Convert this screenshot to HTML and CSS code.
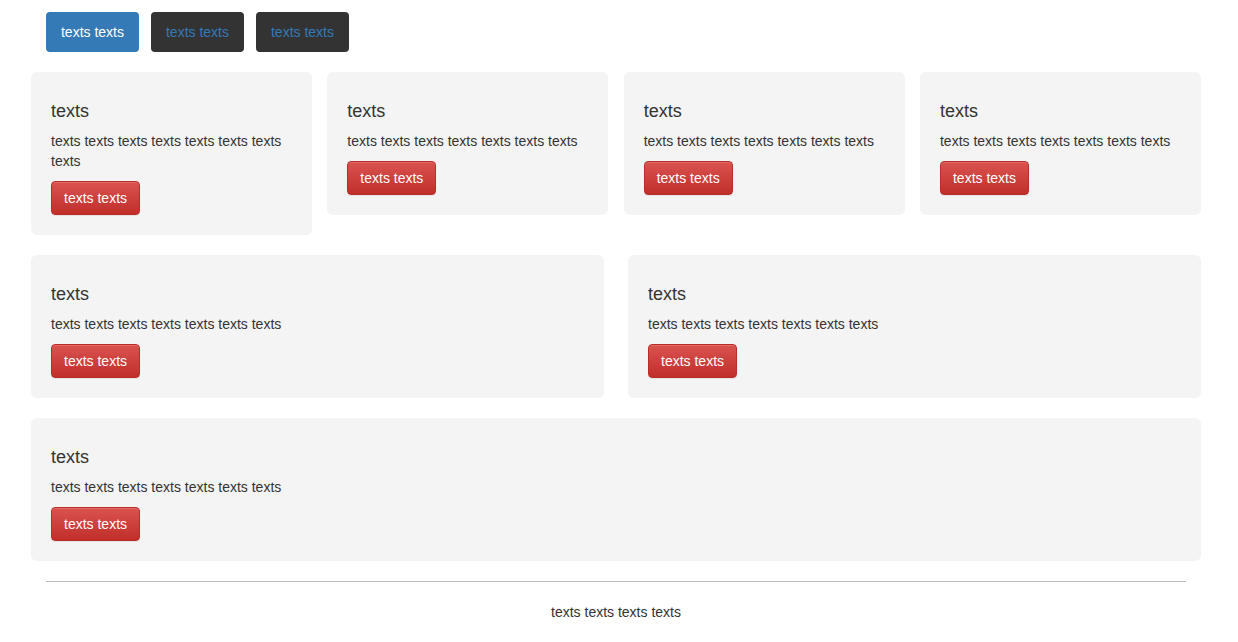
FILE: index.html
```html
<!DOCTYPE html>
<html>
<head>
<meta charset="utf-8">
<link rel="stylesheet" href="styles.css">
</head>
<body>
<div class="container">
  <nav class="nav">
    <a class="nav-btn active">texts texts</a>
    <a class="nav-btn">texts texts</a>
    <a class="nav-btn">texts texts</a>
  </nav>
  <div class="row row-4">
    <div class="card"><h3>texts</h3><p>texts texts texts texts texts texts texts texts</p><a class="btn">texts texts</a></div>
    <div class="card"><h3>texts</h3><p>texts texts texts texts texts texts texts</p><a class="btn">texts texts</a></div>
    <div class="card"><h3>texts</h3><p>texts texts texts texts texts texts texts</p><a class="btn">texts texts</a></div>
    <div class="card"><h3>texts</h3><p>texts texts texts texts texts texts texts</p><a class="btn">texts texts</a></div>
  </div>
  <div class="row row-2">
    <div class="card"><h3>texts</h3><p>texts texts texts texts texts texts texts</p><a class="btn">texts texts</a></div>
    <div class="card"><h3>texts</h3><p>texts texts texts texts texts texts texts</p><a class="btn">texts texts</a></div>
  </div>
  <div class="row row-1">
    <div class="card"><h3>texts</h3><p>texts texts texts texts texts texts texts</p><a class="btn">texts texts</a></div>
  </div>
  <hr class="divider">
  <footer class="footer">texts texts texts texts</footer>
</div>
</body>
</html>
```
FILE: styles.css
```css
html, body {
  margin: 0;
  padding: 0;
  background: #fff;
}
body {
  font-family: "Liberation Sans", Arial, sans-serif;
  font-size: 14px;
  line-height: 20px;
  color: #333;
}
.container {
  width: 1170px;
  margin-left: 31px;
  padding-top: 12px;
}
.nav {
  display: flex;
  gap: 12px;
  padding: 0 15px;
  margin-bottom: 20px;
}
.nav-btn {
  display: block;
  width: 93px;
  box-sizing: border-box;
  text-align: center;
  padding: 10px 0;
  background: #333;
  color: #337ab7;
  border-radius: 4px;
}
.nav-btn.active {
  background: #337ab7;
  color: #fff;
}
.row {
  display: grid;
  margin-bottom: 20px;
  align-items: start;
}
.row-4 {
  grid-template-columns: repeat(4, 1fr);
  gap: 15.33px;
}
.row-2 {
  grid-template-columns: 1fr 1fr;
  gap: 24px;
}
.row-1 {
  grid-template-columns: 1fr;
}
.card {
  background: #f4f4f4;
  border-radius: 6px;
  padding: 20px 20px 20px;
}
.card h3 {
  font-size: 18px;
  font-weight: normal;
  line-height: 20px;
  margin: 9px 0 10px;
}
.card p {
  margin: 0 0 10px;
}
.btn {
  display: inline-block;
  box-sizing: border-box;
  height: 34px;
  padding: 6px 12px;
  color: #fff;
  border: 1px solid #b92c28;
  border-radius: 4px;
  background: linear-gradient(to bottom, #d9534f 0%, #c12e2a 100%);
  box-shadow: inset 0 1px 0 rgba(255,255,255,.15), 0 1px 1px rgba(0,0,0,.075);
}
.divider {
  border: 0;
  border-top: 1px solid #bbb;
  margin: 0 15px 20px;
}
.footer {
  text-align: center;
  padding-bottom: 20px;
}
```
